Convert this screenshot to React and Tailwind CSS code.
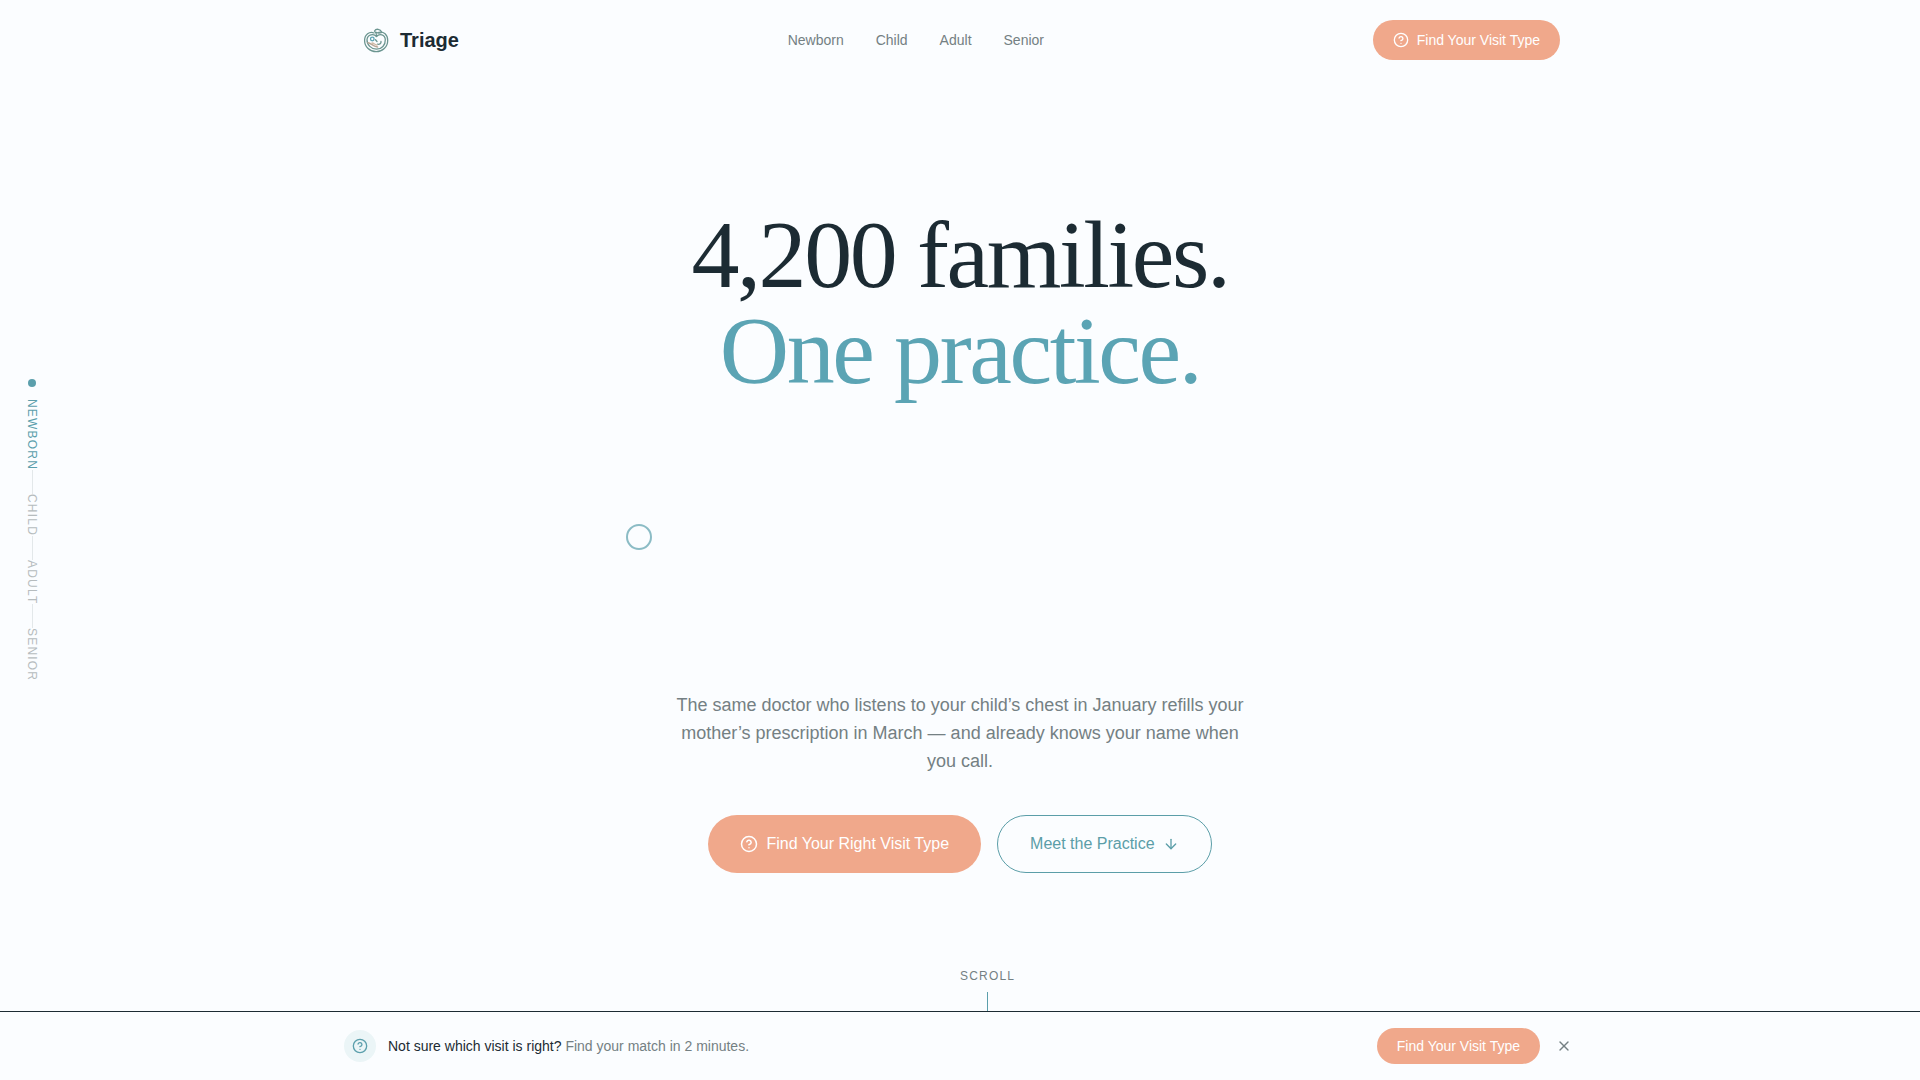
import { ArrowDown, CircleHelp, X } from "lucide-react";

const stages = ["Newborn", "Child", "Adult", "Senior"];

function Logo() {
  return (
    <svg className="size-8" viewBox="0 0 32 32" fill="none" stroke="#6b9590" strokeWidth="1.3" strokeLinecap="round" strokeLinejoin="round" aria-hidden="true">
      <path d="M14 9C9.500 7 4.600 10.500 4.600 16.500c0 6.500 5.400 11.200 11.600 11.200S27.700 23 27.700 16.500c0-6-4-9.300-9-8.200" />
      <path d="M16.500 12.500C14 9.300 7.300 10 7 15.800c-.2 5 4.300 9.400 9.500 9.400s9-4.200 8.800-9.400c-.2-5.300-6-6.500-8.800-3.300Z" />
      <path d="M16.500 12.300c.2-2.300-.6-4-2-5.300 1.500-2.600 5.800-2.300 7.300 1.300-2 .9-3.800.9-5.300.1" />
      <circle cx="12.300" cy="15" r="1.800" stroke="#5ba4b4" />
      <path d="M15.500 15.800l1.500 1.700M17.500 20.200c2.300.4 3.800-.9 3.500-2.700" />
      <path d="M8 18.800c3 .2 4.500 3.600 9.500 4.200" stroke="#b9a595" strokeWidth="1.600" />
      <path d="M12 19c2 .2 3 1.800 5 2" stroke="#d0b8a4" />
    </svg>
  );
}

export default function App() {
  return (
    <div className="relative flex min-h-screen flex-col overflow-hidden bg-[#fbfdff] font-['Liberation_Sans',Arial,sans-serif] text-[#1c2b33]">
      <header className="w-full">
        <div className="mx-auto flex h-20 max-w-7xl items-center justify-between px-10">
          <a href="#top" className="flex items-center gap-2 text-xl font-bold">
            <Logo />
            Triage
          </a>
          <nav aria-label="Main" className="flex gap-8 text-sm text-[#748083]">
            {stages.map((stage) => (
              <a key={stage} href={`#${stage.toLowerCase()}`}>{stage}</a>
            ))}
          </nav>
          <button type="button" className="flex items-center gap-2 rounded-full bg-[#f0a88b] px-5 py-2.5 text-sm text-white">
            <CircleHelp size={16} />
            Find Your Visit Type
          </button>
        </div>
      </header>

      <main className="flex flex-1 flex-col items-center justify-center px-6 pb-20 text-center">
        <h1 className="font-['Liberation_Serif','Times_New_Roman',serif] text-8xl leading-none tracking-tight">
          <span className="block">4,200 families.</span>
          <span className="block text-[#5ba4b4]">One practice.</span>
        </h1>
        <p className="mt-73 max-w-xl text-lg text-[#748083]">
          The same doctor who listens to your child’s chest in January refills your mother’s prescription in March — and already knows your name when you call.
        </p>
        <div className="mt-10 flex gap-4">
          <button type="button" className="flex items-center gap-2 rounded-full bg-[#f0a88b] px-8 text-white">
            <CircleHelp size={18} />
            Find Your Right Visit Type
          </button>
          <a href="#practice" className="flex items-center gap-2 rounded-full border border-[#5b9ea8] px-8 py-4 text-[#5b9ea8]">
            Meet the Practice
            <ArrowDown size={16} />
          </a>
        </div>
      </main>

      <nav aria-label="Life stages" className="absolute inset-y-0 left-6 flex w-4 flex-col items-center justify-center pb-5 text-xs tracking-widest uppercase">
        <span className="mb-3 size-2 rounded-full bg-[#5b9fac]" />
        {stages.map((stage, i) => (
          <div key={stage} className="flex flex-col items-center">
            {i > 0 && <span className="h-6 w-px bg-[#e3e8ea]" />}
            <a href={`#${stage.toLowerCase()}`} className={i === 0 ? "text-[#5b9fac] [writing-mode:vertical-rl]" : "text-[#b6bcbe] [writing-mode:vertical-rl]"}>
              {stage}
            </a>
          </div>
        ))}
      </nav>

      <span className="pointer-events-none absolute top-1/2 left-1/3 -mt-4 -ml-3.5 size-6.5 rounded-full border-2 border-[#5b9fac]/70" />

      <div className="absolute bottom-8 left-1/2 flex flex-col items-center gap-2 text-xs tracking-widest text-[#748083] uppercase">
        Scroll
        <span className="h-14 w-px bg-[#5b9fac]" />
      </div>

      <aside className="absolute inset-x-0 bottom-0 border-t border-[#1c2b33] bg-[#fbfdff]">
        <div className="mx-auto flex max-w-7xl items-center justify-between px-6 py-4 text-sm">
          <div className="flex items-center gap-3">
            <span className="flex size-8 items-center justify-center rounded-full bg-[#ebf5f7] text-[#5b9fac]">
              <CircleHelp size={16} />
            </span>
            <p>
              Not sure which visit is right? <span className="text-[#748083]">Find your match in 2 minutes.</span>
            </p>
          </div>
          <div className="flex items-center gap-3">
            <button type="button" className="rounded-full bg-[#f0a88b] px-5 py-2 text-white">Find Your Visit Type</button>
            <button type="button" aria-label="Dismiss" className="p-1 text-[#748083]">
              <X size={16} />
            </button>
          </div>
        </div>
      </aside>
    </div>
  );
}
